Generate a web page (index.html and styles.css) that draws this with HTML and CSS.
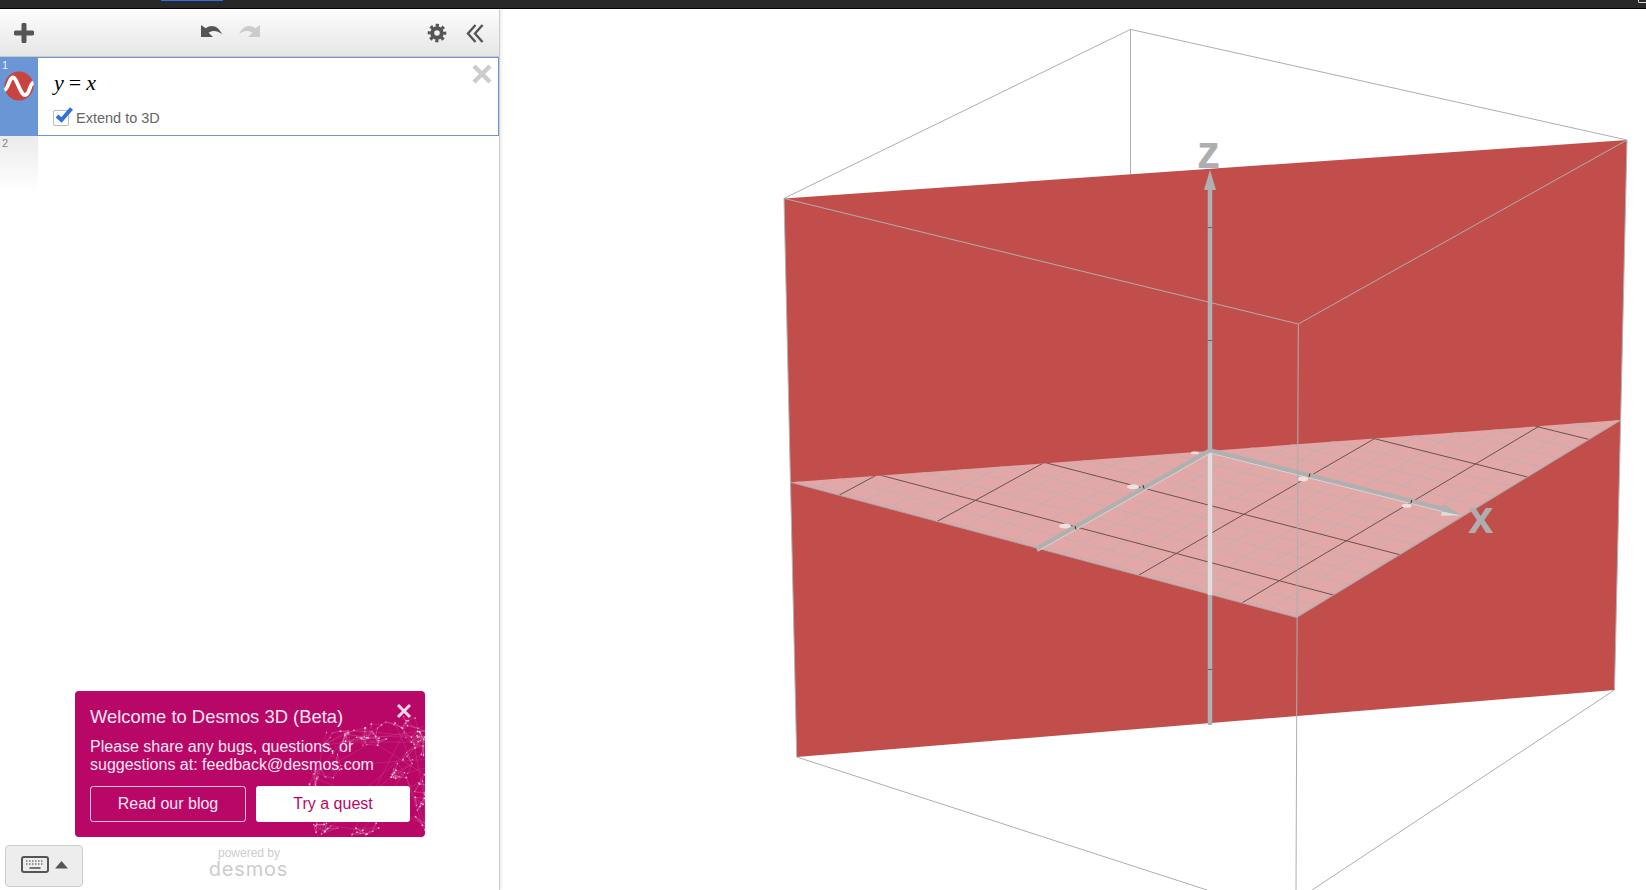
FILE: index.html
```html
<!DOCTYPE html>
<html>
<head>
  <title>Desmos 3D</title>
  <link rel="stylesheet" href="styles.css">
</head>
<body>
  <div class="topbar">
    <div class="tab-mark"></div>
    <div class="corner-mark"></div>
  </div>

  <div class="app">
    <div class="sidebar">
      <div class="toolbar">
        <svg class="tool-add" width="20" height="20" viewBox="0 0 20 20">
          <path d="M10 2v16M2 10h16" stroke="#555" stroke-width="5" stroke-linecap="round" fill="none"/>
        </svg>
        <div class="tool-history">
          <svg width="23" height="14" viewBox="0 0 23 14">
            <path d="M1 1v12h12l-4.4-4.2c4-2.6 8.400-2.300 13.400 1.400C19 3.400 12.500-.8 5.800 4.200z" fill="#555"/>
          </svg>
          <svg width="23" height="14" viewBox="0 0 23 14">
            <path d="M22 1v12H10l4.400-4.200C10.400 6.200 6 6.500 1 10.200 4 3.400 10.500-.8 17.200 4.200z" fill="#ccc"/>
          </svg>
        </div>
        <div class="tool-right">
          <svg width="20" height="20" viewBox="0 0 20 20">
            <circle cx="10" cy="10" r="4.800" stroke="#555" stroke-width="4" fill="none"/>
            <circle cx="10" cy="10" r="7.600" stroke="#555" stroke-width="3.400" fill="none" stroke-dasharray="3.100 2.870" stroke-dashoffset="1.500"/>
          </svg>
          <svg width="18" height="19" viewBox="0 0 18 19">
            <path d="M9.500 1L2 9.500 9.500 18M16.500 1L9 9.500 16.500 18" stroke="#555" stroke-width="2.400" fill="none"/>
          </svg>
        </div>
      </div>

      <div class="expr expr-active">
        <div class="expr-gutter">
          <span class="expr-num">1</span>
          <svg class="expr-color" width="30" height="30" viewBox="0 0 30 30">
            <circle cx="15" cy="15" r="14.500" fill="#c74440"/>
            <path d="M.5 19C4.500 18 5 6.500 9 6.500S16 24 21 24 25 13 29.500 11.500" stroke="#fff" stroke-width="3.800" fill="none"/>
          </svg>
        </div>
        <div class="expr-main">
          <div class="math"><i>y</i><span class="math-eq">=</span><i>x</i></div>
          <label class="extend">
            <span class="checkbox">
              <svg width="21" height="18" viewBox="0 0 21 18">
                <path d="M4 10L8.500 14 18.500 2.500" stroke="#2f72dc" stroke-width="4" fill="none"/>
              </svg>
            </span>
            Extend to 3D
          </label>
          <svg class="expr-delete" width="20" height="20" viewBox="0 0 20 20">
            <path d="M2 2l16 16M18 2L2 18" stroke="#ccc" stroke-width="4.500" fill="none"/>
          </svg>
        </div>
      </div>

      <div class="expr expr-empty">
        <div class="expr-gutter"><span class="expr-num">2</span></div>
      </div>

      <div class="sidebar-fill"></div>

      <div class="welcome">
        <svg class="welcome-art" id="welcomeArt" width="350" height="146" viewBox="0 0 350 146"></svg>
        <svg class="welcome-close" width="16" height="16" viewBox="0 0 16 16">
          <path d="M2 2l12 12M14 2L2 14" stroke="#f7d9ea" stroke-width="3" fill="none"/>
        </svg>
        <div class="welcome-title">Welcome to Desmos 3D (Beta)</div>
        <div class="welcome-text">Please share any bugs, questions, or<br>suggestions at: feedback@desmos.com</div>
        <div class="welcome-actions">
          <a class="btn btn-outline">Read our blog</a>
          <a class="btn btn-solid">Try a quest</a>
        </div>
      </div>

      <div class="sidebar-foot">
        <div class="keypad-btn">
          <svg width="28" height="17" viewBox="0 0 28 17">
            <rect x="1" y="1" width="26" height="15" rx="2" fill="none" stroke="#555" stroke-width="2"/>
            <path d="M5 5h18M5 8h18" stroke="#777" stroke-width="1.500" stroke-dasharray="1.500 1.500" fill="none"/>
            <path d="M8.500 12h11" stroke="#777" stroke-width="2" fill="none"/>
          </svg>
          <svg width="13" height="8" viewBox="0 0 13 8"><path d="M6.500 0L13 7.500H0z" fill="#555"/></svg>
        </div>
        <div class="brand">
          <div class="brand-by">powered by</div>
          <div class="brand-name">desmos</div>
        </div>
      </div>
    </div>

    <div class="plot">
      <svg class="plot-svg" width="1146" height="881" viewBox="500 9 1146 881">
        <defs>
          <clipPath id="floorClip"><path d="M790.700 482.300L1621 420 1296.700 617.500z"/></clipPath>
        </defs>

        <path class="box-line" d="M784 198.400L1130.500 29.400 1627 140M1130.500 29.400V180"/>
        <path d="M784 198.400L1627 140 1614.500 690 796.700 757z" fill="#c24e4c"/>
        <path class="edge-line" d="M784 198.400L796.700 757M1627 140L1614.500 690"/>

        <path d="M790.700 482.300L1621 420 1296.700 617.500z" fill="#e2a8a8"/>
        <g id="floorGrid" clip-path="url(#floorClip)"></g>
        <path d="M1621 420L1296.700 617.500 790.700 482.300" fill="none" stroke="#b5a3a3" stroke-width="1"/>

        <path class="z-axis" d="M1210 725V185"/>
        <path d="M1210 453V595" stroke="#e2dcdc" stroke-width="4.500" fill="none"/>
        <path d="M1210 170L1216 190H1204z" fill="#b0b0b0"/>
        <path class="z-tick" d="M1207.500 227.500h5M1207.500 340.500h5M1207.500 669.500h5"/>

        <path class="axis" d="M1210 450.500L1445 509.500M1210 450.500L1036.500 549"/>
        <path class="axis-glow" d="M1209.400 452.900L1444.400 511.900M1211.200 452.700L1037.700 551.200"/>
        <path d="M1461.700 515.500L1440.800 515.800 1443.800 504.200z" fill="#b0b0b0"/>
        <path d="M1461.700 515.500L1440.800 515.800 1442 511.500z" fill="#e2dcdc"/>
        <path class="axis-tick" d="M1143 485l1 3.500M1075 526l1 3.500M1310 473.500l-1 3.500M1411.800 500l-1 3.500"/>

        <g class="tick-smudge">
          <ellipse cx="1133" cy="486.700" rx="6" ry="2.500"/>
          <ellipse cx="1065" cy="526" rx="6" ry="2.500"/>
          <ellipse cx="1303" cy="479" rx="5" ry="2.500"/>
          <ellipse cx="1406.700" cy="505.700" rx="5" ry="2"/>
          <ellipse cx="1195" cy="452.700" rx="4" ry="1.500"/>
        </g>

        <path class="box-line" d="M784 198.400L1298.300 324 1627 140M1298.300 324L1296 890M796.700 757L1207 890M1614.500 690L1312 890"/>

        <text class="axis-label" x="1197" y="168">z</text>
        <text class="axis-label" x="1468" y="533">x</text>
      </svg>
    </div>
  </div>

  <script src="plot.js"></script>
</body>
</html>
```

FILE: styles.css
```css
* {
  box-sizing: border-box;
}

html, body {
  height: 100%;
}

body {
  margin: 0;
  display: flex;
  flex-direction: column;
  overflow: hidden;
  background: #fff;
  font-family: "Liberation Sans", Arial, sans-serif;
}

.topbar {
  height: 9px;
  flex: none;
  display: flex;
  justify-content: space-between;
  background: #282828;
  border-bottom: 1px solid #000;
}

.tab-mark {
  width: 62px;
  height: 1px;
  margin-left: 161px;
  background: #2f6fe0;
}

.corner-mark {
  width: 8px;
  height: 3px;
  border-left: 1px solid #ddd;
  border-bottom: 1px solid #ddd;
  border-bottom-left-radius: 2px;
}

.app {
  flex: 1;
  display: flex;
  min-height: 0;
}

.sidebar {
  width: 500px;
  flex: none;
  display: flex;
  flex-direction: column;
  border-right: 1px solid #cfcfcf;
  box-shadow: 1px 0 3px rgba(0,0,0,0.1);
}

.toolbar {
  height: 48px;
  flex: none;
  position: relative;
  display: flex;
  align-items: center;
  padding: 0 15px 0 14px;
  background: linear-gradient(#fdfdfd, #e6e6e6);
  border-bottom: 1px solid #c9c9c9;
}

.tool-add {
  margin-top: 1px;
}

.tool-history {
  display: flex;
  gap: 15px;
  margin-left: 166px;
  margin-top: -3px;
}

.tool-right {
  margin-left: auto;
  display: flex;
  align-items: center;
  gap: 19px;
  margin-top: 1px;
}

.expr {
  display: flex;
  flex: none;
}

.expr-gutter {
  width: 38px;
  flex: none;
  position: relative;
}

.expr-num {
  display: block;
  padding: 1px 0 0 2px;
  font-size: 11px;
  line-height: 12px;
  color: #888;
}

.expr-active {
  height: 79px;
  border: 1px solid #6b96d6;
  border-left: 0;
}

.expr-active .expr-gutter {
  background: #6b96d6;
}

.expr-active .expr-num {
  color: #e6eefa;
}

.expr-color {
  position: absolute;
  left: 4px;
  top: 13px;
}

.expr-main {
  flex: 1;
  position: relative;
  padding: 13px 0 0 15px;
}

.expr-delete {
  position: absolute;
  right: 6px;
  top: 6px;
}

.math {
  height: 28px;
  padding-left: 1px;
  font-family: "Liberation Serif", "Times New Roman", serif;
  font-size: 22px;
  line-height: 24px;
  color: #000;
}

.math-eq {
  margin: 0 5px;
}

.extend {
  display: flex;
  align-items: center;
  margin-top: 11px;
  font-size: 14.500px;
  color: #666;
}

.checkbox {
  width: 16px;
  height: 16px;
  position: relative;
  margin-right: 7px;
  background: #fff;
  border: 1px solid #bbb;
  border-radius: 2px;
}

.checkbox svg {
  position: absolute;
  left: -1px;
  top: -5px;
}

.expr-empty {
  height: 55px;
}

.expr-empty .expr-gutter {
  background: linear-gradient(#ebebeb, #fff);
}

.sidebar-fill {
  flex: 1;
}

.welcome {
  width: 350px;
  height: 146px;
  flex: none;
  position: relative;
  overflow: hidden;
  margin-left: 75px;
  padding: 15px 15px 0;
  border-radius: 4px;
  background: #b90767;
  color: #fbe6f1;
}

.welcome-art {
  position: absolute;
  left: 0;
  top: 0;
}

.welcome-close {
  position: absolute;
  right: 13px;
  top: 12px;
}

.welcome-title {
  position: relative;
  font-size: 18.400px;
  line-height: 21px;
}

.welcome-text {
  position: relative;
  margin-top: 11px;
  font-size: 16px;
  line-height: 18px;
}

.welcome-actions {
  position: relative;
  display: flex;
  gap: 10px;
  margin-top: 12px;
}

.btn {
  height: 36px;
  display: flex;
  align-items: center;
  justify-content: center;
  font-size: 16px;
  border-radius: 3px;
}

.btn-outline {
  width: 156px;
  border: 1px solid #f0c3dc;
}

.btn-solid {
  width: 154px;
  background: #fff;
  color: #b90767;
}

.sidebar-foot {
  height: 53px;
  flex: none;
  display: flex;
}

.keypad-btn {
  width: 78px;
  height: 42px;
  display: flex;
  align-items: center;
  gap: 6px;
  margin: 8px 0 0 5px;
  padding: 0 0 3px 15px;
  background: #ededed;
  border: 1px solid #ccc;
  border-radius: 4px;
}

.brand {
  width: 80px;
  margin: 9px 0 0 126px;
  text-align: center;
  color: #ccc;
}

.brand-by {
  font-size: 12px;
  line-height: 14px;
}

.brand-name {
  margin-left: -1px;
  font-family: Inter, "Noto Sans", sans-serif;
  font-size: 20px;
  line-height: 18px;
  letter-spacing: 0.8px;
}

.plot {
  flex: 1;
  min-width: 0;
}

.plot-svg {
  display: block;
}

.box-line {
  fill: none;
  stroke: #aeaeae;
  stroke-width: 1;
}

.edge-line {
  fill: none;
  stroke: #b4b4b4;
  stroke-width: 1;
}

.z-axis {
  fill: none;
  stroke: #b0b0b0;
  stroke-width: 4.500;
}

.z-tick {
  fill: none;
  stroke: #666;
  stroke-width: 1;
}

.axis {
  fill: none;
  stroke: #b0b0b0;
  stroke-width: 4.500;
}

.axis-glow {
  fill: none;
  stroke: #ddd2d2;
  stroke-width: 1;
}

.axis-tick {
  fill: none;
  stroke: #333;
  stroke-width: 1;
}

.tick-smudge {
  fill: #ece0e0;
}

.axis-label {
  font-family: "Liberation Sans", Arial, sans-serif;
  font-size: 46px;
  font-weight: bold;
  fill: #aeaeae;
}

.grid-minor {
  stroke: #c9adad;
  stroke-width: 1.200;
}

.grid-major {
  stroke: #6f4f4f;
  stroke-width: 1;
}

.art-line {
  stroke: rgba(255,255,255,0.14);
  stroke-width: 0.7;
}

.art-dot {
  fill: rgba(255,255,255,0.6);
}
```

FILE: plot.js
```js
var SVG_NS = "http://www.w3.org/2000/svg";

function addLine(parent, x1, y1, x2, y2, cls) {
  var line = document.createElementNS(SVG_NS, "line");
  line.setAttribute("x1", x1.toFixed(1));
  line.setAttribute("y1", y1.toFixed(1));
  line.setAttribute("x2", x2.toFixed(1));
  line.setAttribute("y2", y2.toFixed(1));
  line.setAttribute("class", cls);
  parent.appendChild(line);
}

// floor plane, projected from graph units to screen
function project(u, v) {
  var w = 1 - 0.00836 * u - 0.0117 * v;
  return [
    1210 + (99.16 * u - 65.9 * v) / w,
    450.5 + (25.3 * u + 37.2 * v) / w
  ];
}

function drawFloorGrid() {
  var grid = document.getElementById("floorGrid");
  var size = 2.6;
  var passes = [false, true];
  for (var p = 0; p < passes.length; p++) {
    for (var i = -10; i <= 10; i++) {
      var major = i % 4 === 0;
      if (major !== passes[p]) continue;
      if (i === 0) continue;
      var c = i / 4;
      var cls = major ? "grid-major" : "grid-minor";
      var a = project(c, -size);
      var b = project(c, size);
      addLine(grid, a[0], a[1], b[0], b[1], cls);
      a = project(-size, c);
      b = project(size, c);
      addLine(grid, a[0], a[1], b[0], b[1], cls);
    }
  }
}

function drawWelcomeArt() {
  var art = document.getElementById("welcomeArt");
  var seed = 7;
  function rnd() {
    seed = (seed * 16807) % 2147483647;
    return seed / 2147483647;
  }

  // clusters of the globe picture: x, y, spread x, spread y, count
  var clusters = [
    [278, 46, 30, 10, 30],
    [340, 50, 11, 18, 26],
    [328, 78, 12, 10, 16],
    [345, 112, 9, 30, 24],
    [270, 138, 34, 6, 22],
    [240, 95, 6, 20, 6]
  ];
  var dots = [];
  clusters.forEach(function (cl) {
    for (var i = 0; i < cl[4]; i++) {
      dots.push([
        cl[0] + (rnd() - 0.5) * 2 * cl[2],
        cl[1] + (rnd() - 0.5) * 2 * cl[3]
      ]);
    }
  });

  // loose points scattered over the rim of the globe
  for (var i = 0; i < 60; i++) {
    var t = Math.PI * 0.75 + rnd() * Math.PI * 1.1;
    var r = 72 + rnd() * 24;
    dots.push([325 + Math.cos(t) * r, 119 + Math.sin(t) * r]);
  }

  dots.forEach(function (d, n) {
    var best = -1, bestDist = 1e9, next = -1;
    dots.forEach(function (o, m) {
      if (m === n) return;
      var dist = (o[0] - d[0]) * (o[0] - d[0]) + (o[1] - d[1]) * (o[1] - d[1]);
      if (dist < bestDist && dist > 60) {
        next = best;
        best = m;
        bestDist = dist;
      }
    });
    if (best >= 0) addLine(art, d[0], d[1], dots[best][0], dots[best][1], "art-line");
    if (next >= 0) addLine(art, d[0], d[1], dots[next][0], dots[next][1], "art-line");
    if (n % 9 === 0) {
      var far = dots[(n * 7 + 31) % dots.length];
      addLine(art, d[0], d[1], far[0], far[1], "art-line");
    }
  });

  dots.forEach(function (d) {
    var dot = document.createElementNS(SVG_NS, "circle");
    dot.setAttribute("cx", d[0].toFixed(1));
    dot.setAttribute("cy", d[1].toFixed(1));
    dot.setAttribute("r", (0.5 + rnd() * 0.6).toFixed(2));
    dot.setAttribute("class", "art-dot");
    art.appendChild(dot);
  });
}

drawFloorGrid();
drawWelcomeArt();
```
